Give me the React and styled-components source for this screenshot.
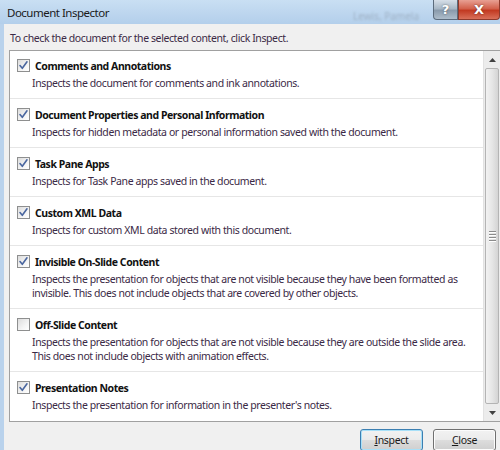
import React from "react";
import styled, { createGlobalStyle } from "styled-components";

const GlobalStyle = createGlobalStyle`
  html, body {
    margin: 0;
    padding: 0;
    width: 500px;
    height: 450px;
    overflow: hidden;
    background: #f0f0f0;
  }
  * {
    box-sizing: border-box;
  }
`;

const Window = styled.div`
  width: 500px;
  height: 450px;
  display: flex;
  flex-direction: column;
  font-family: "Noto Sans", "Open Sans", sans-serif;
  background: #f0f0f0;
  overflow: hidden;
`;

const TitleBar = styled.div`
  height: 24px;
  flex-shrink: 0;
  display: flex;
  align-items: flex-start;
  background: linear-gradient(180deg, #c9dff3 0%, #bcd5ee 60%, #b3cfeb 100%);
`;

const Title = styled.div`
  padding: 5px 0 0 7px;
  font-size: 11.5px;
  letter-spacing: -0.5px;
  color: #1a1a1a;
  flex: 1;
`;

const Ghost = styled.div`
  padding: 9px 14px 0 0;
  font-size: 10px;
  color: #9fb2c6;
  filter: blur(0.8px);
`;

const CaptionButton = styled.div`
  width: ${p => p.w}px;
  height: 20px;
  display: flex;
  align-items: center;
  justify-content: center;
  font-family: "DejaVu Sans", sans-serif;
  font-weight: bold;
  color: #fff;
  font-size: ${p => p.size}px;
  border: 1px solid ${p => (p.red ? "#8e3a2c" : "#5b6b7c")};
  border-top: none;
  border-radius: ${p => (p.red ? "0 0 4px 0" : "0 0 0 4px")};
  background: ${p =>
    p.red
      ? "linear-gradient(180deg, #e8a093 0%, #d2614c 45%, #c23a22 55%, #d9705a 100%)"
      : "linear-gradient(180deg, #d6dfe8 0%, #a9b8c6 45%, #8a9bac 55%, #aebdcb 100%)"};
  text-shadow: 0 0 2px rgba(0, 0, 0, 0.55);
`;

const Frame = styled.div`
  flex: 1;
  display: flex;
  border-left: 4px solid #b9d2ec;
`;

const Body = styled.div`
  flex: 1;
  display: flex;
  flex-direction: column;
  padding: 6px 0 0 5px;
`;

const Intro = styled.div`
  font-size: 10.5px;
  letter-spacing: -0.4px;
  color: #3b2a46;
  line-height: 16px;
  padding-left: 1px;
  margin-bottom: 4px;
`;

const ListBox = styled.div`
  height: 372px;
  flex-shrink: 0;
  display: flex;
  border: 1px solid #a0a0a0;
  border-right: none;
  background: #fff;
`;

const List = styled.div`
  flex: 1;
  display: flex;
  flex-direction: column;
  overflow: hidden;
`;

const Item = styled.div`
  padding: ${p => (p.first ? 7 : 8)}px 0 8px 7px;
  border-bottom: ${p => (p.last ? "none" : "1px solid #e6e6e6")};
`;

const ItemHead = styled.div`
  display: flex;
  align-items: center;
  gap: 5px;
  height: 15px;
`;

const ItemTitle = styled.div`
  font-size: 10.5px;
  letter-spacing: -0.45px;
  font-weight: bold;
  color: #111;
`;

const ItemDesc = styled.div`
  margin-top: 3px;
  padding-left: 15px;
  font-size: 10.5px;
  letter-spacing: -0.4px;
  line-height: 14px;
  color: #3b2a46;
  white-space: nowrap;
`;

const Box = styled.div`
  width: 13px;
  height: 13px;
  border: 1px solid #8e8f8f;
  background: linear-gradient(135deg, #dcdcdc 0%, #f4f4f4 60%, #fff 100%);
  display: flex;
  align-items: center;
  justify-content: center;
  flex-shrink: 0;
`;

const Scrollbar = styled.div`
  width: 17px;
  display: flex;
  flex-direction: column;
  background: #ececec;
  border-left: 1px solid #e2e2e2;
`;

const Arrow = styled.div`
  height: 17px;
  display: flex;
  align-items: center;
  justify-content: center;
`;

const Thumb = styled.div`
  flex: 1;
  margin: 0 1px;
  border: 1px solid #b4b4b4;
  border-radius: 2px;
  background: linear-gradient(90deg, #f2f2f2 0%, #e6e6e6 50%, #d4d4d4 100%);
  display: flex;
  align-items: center;
  justify-content: center;
`;

const Grip = styled.div`
  width: 7px;
  display: flex;
  flex-direction: column;
  gap: 2px;
  span {
    height: 1px;
    background: #8c8c8c;
    box-shadow: 0 1px 0 #fff;
  }
`;

const Footer = styled.div`
  display: flex;
  justify-content: flex-end;
  gap: 10px;
  padding: 7px 4px 0 0;
`;

const Button = styled.div`
  width: 63px;
  height: 22px;
  display: flex;
  align-items: center;
  justify-content: center;
  font-size: 10.5px;
  letter-spacing: -0.3px;
  color: #1a1a1a;
  border: 1px solid ${p => (p.primary ? "#3c7fb1" : "#707070")};
  border-radius: 3px;
  box-shadow: inset 0 0 0 1px ${p => (p.primary ? "#a8e0f8" : "#fcfcfc")};
  background: linear-gradient(180deg, #f2f2f2 0%, #ebebeb 50%, #dddddd 51%, #cfcfcf 100%);
  u {
    text-decoration: underline;
  }
`;

const Check = () => (
  <svg width="11" height="11" viewBox="0 0 11 11">
    <path
      d="M2 5.5 L4.3 8.3 L9 1.8"
      fill="none"
      stroke="#4a669f"
      strokeWidth="1.6"
      strokeLinecap="round"
      strokeLinejoin="round"
    />
  </svg>
);

const items = [
  {
    title: "Comments and Annotations",
    desc: ["Inspects the document for comments and ink annotations."],
    on: true
  },
  {
    title: "Document Properties and Personal Information",
    desc: ["Inspects for hidden metadata or personal information saved with the document."],
    on: true
  },
  {
    title: "Task Pane Apps",
    desc: ["Inspects for Task Pane apps saved in the document."],
    on: true
  },
  {
    title: "Custom XML Data",
    desc: ["Inspects for custom XML data stored with this document."],
    on: true
  },
  {
    title: "Invisible On-Slide Content",
    desc: [
      "Inspects the presentation for objects that are not visible because they have been formatted as",
      "invisible. This does not include objects that are covered by other objects."
    ],
    on: true
  },
  {
    title: "Off-Slide Content",
    desc: [
      "Inspects the presentation for objects that are not visible because they are outside the slide area.",
      "This does not include objects with animation effects."
    ],
    on: false
  },
  {
    title: "Presentation Notes",
    desc: ["Inspects the presentation for information in the presenter's notes."],
    on: true
  }
];

export default function App() {
  return (
    <>
      <GlobalStyle />
      <Window>
        <TitleBar>
          <Title>Document Inspector</Title>
          <Ghost>Lewis, Pamela</Ghost>
          <CaptionButton w={25} size={13}>?</CaptionButton>
          <CaptionButton w={42} size={13} red>
            X
          </CaptionButton>
        </TitleBar>
        <Frame>
          <Body>
            <Intro>To check the document for the selected content, click Inspect.</Intro>
            <ListBox>
              <List>
                {items.map((it, i) => (
                  <Item key={it.title} first={i === 0} last={i === items.length - 1}>
                    <ItemHead>
                      <Box>{it.on && <Check />}</Box>
                      <ItemTitle>{it.title}</ItemTitle>
                    </ItemHead>
                    <ItemDesc>
                      {it.desc.map(line => (
                        <div key={line}>{line}</div>
                      ))}
                    </ItemDesc>
                  </Item>
                ))}
              </List>
              <Scrollbar>
                <Arrow>
                  <svg width="7" height="4" viewBox="0 0 7 4">
                    <path d="M0 4 L3.5 0 L7 4 Z" fill="#404040" />
                  </svg>
                </Arrow>
                <Thumb>
                  <Grip>
                    <span />
                    <span />
                    <span />
                    <span />
                  </Grip>
                </Thumb>
                <Arrow>
                  <svg width="7" height="4" viewBox="0 0 7 4">
                    <path d="M0 0 L7 0 L3.5 4 Z" fill="#404040" />
                  </svg>
                </Arrow>
              </Scrollbar>
            </ListBox>
            <Footer>
              <Button primary>
                <span>
                  <u>I</u>nspect
                </span>
              </Button>
              <Button>
                <span>
                  <u>C</u>lose
                </span>
              </Button>
            </Footer>
          </Body>
        </Frame>
      </Window>
    </>
  );
}
